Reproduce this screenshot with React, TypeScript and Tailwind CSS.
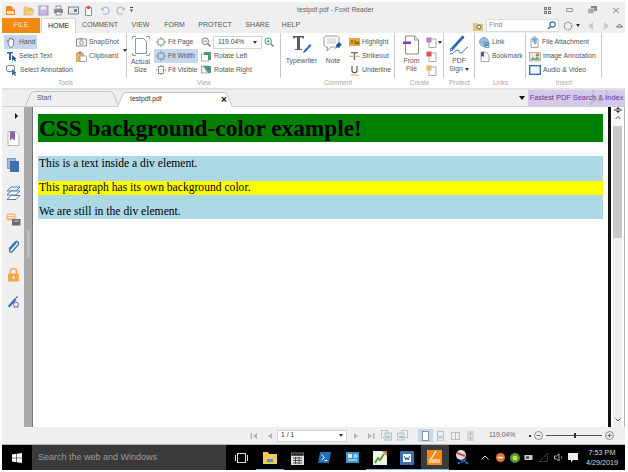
import React from 'react';

const Svg: React.FC<{ w: number; h: number; className?: string; children: React.ReactNode }> = ({ w, h, className, children }) => (
  <svg width={w} height={h} viewBox={`0 0 ${w} ${h}`} fill="none" className={`shrink-0 ${className ?? ''}`}>
    {children}
  </svg>
);

const Caret = () => <span className="w-0 h-0 border-x-[2px] border-x-transparent border-t-[3px] border-t-[#333]" />;

/* ---------- quick access ---------- */
const QuickIcons = () => (
  <div className="flex items-center gap-[4px] pl-[3px]">
    <Svg w={11} h={11}>
      <path d="M2 1h5l3 3v6H1V2z" fill="#ee8a1d" />
      <path d="M6 1h2v3h2" stroke="#fff" strokeWidth={0.8} />
      <rect x={2} y={6} width={7} height={3} fill="#fff" opacity={0.75} />
    </Svg>
    <Svg w={11} h={11} className="ml-[3px]">
      <path d="M1 2h3l1 1h4v2H4L1 10z" fill="#f3cf85" stroke="#d9a552" strokeWidth={0.6} />
      <path d="M3 5h8l-2 5H1z" fill="#f3cf85" stroke="#d9a552" strokeWidth={0.6} />
    </Svg>
    <Svg w={11} h={11}>
      <rect x={1} y={1} width={9} height={9} fill="#cbb8df" stroke="#a98fc6" />
      <rect x={3} y={1.5} width={5} height={3} fill="#f2edf7" />
    </Svg>
    <Svg w={11} h={11}>
      <rect x={3} y={1} width={5} height={3} fill="#fff" stroke="#666" strokeWidth={0.7} />
      <rect x={1} y={4} width={9} height={4} fill="#8a8f96" />
      <rect x={3} y={7} width={5} height={3} fill="#fff" stroke="#666" strokeWidth={0.7} />
    </Svg>
    <Svg w={11} h={11}>
      <rect x={0.5} y={2} width={10} height={7} fill="#e8e8e8" stroke="#666" strokeWidth={0.8} />
      <rect x={6} y={4} width={3} height={3} fill="#5d86b8" />
    </Svg>
    <Svg w={11} h={11}>
      <path d="M2.5 2.5h6v8h-6z" fill="#fff" stroke="#777" strokeWidth={0.8} />
      <circle cx={5.5} cy={2.5} r={1.8} fill="#d9553f" />
    </Svg>
    <Svg w={11} h={11} className="ml-[2px]">
      <path d="M2 5a3.6 3.6 0 1 1 1.2 3.4" stroke="#a9bdd9" strokeWidth={1.3} />
      <path d="M0.5 2.5 2.2 6 4.6 4z" fill="#a9bdd9" />
    </Svg>
    <Svg w={11} h={11}>
      <path d="M9 5a3.6 3.6 0 1 0-1.2 3.4" stroke="#a9bdd9" strokeWidth={1.3} />
      <path d="M10.5 2.5 8.8 6 6.4 4z" fill="#a9bdd9" />
    </Svg>
    <Svg w={4} h={6}>
      <rect width={3} height={1} fill="#444" />
      <path d="M0 2.5h3L1.5 5z" fill="#444" />
    </Svg>
  </div>
);

/* ---------- ribbon icons ---------- */
const HandIcon = () => (
  <Svg w={11} h={11}>
    <path d="M2 5 1 4.2c.5-.7 1-.5 2 .4V2.4c0-.9 1-.9 1 0V1.5c0-.9 1.2-.9 1.2 0v.5c0-.8 1.2-.8 1.2 0v1c0-.8 1.2-.8 1.2 0V7c0 2-1 3.3-3 3.3S3.2 8.500 2 5z" fill="#fff" stroke="#555" strokeWidth={0.7} />
  </Svg>
);
const SelectTextIcon = () => (
  <Svg w={11} h={11}>
    <path d="M1 1h6v1.500H5V9H3V2.500H1z" fill="#2c6cae" />
    <path d="M6 4v6l1.500-1.500L9 10.500l1-.5-1-2 1.500-.3z" fill="#24557f" />
  </Svg>
);
const SelectAnnotIcon = () => (
  <Svg w={12} h={11}>
    <rect x={0.5} y={0.5} width={8} height={6} rx={1.5} stroke="#6f7b85" strokeWidth={0.9} />
    <path d="M6 4v6.500l1.500-1.500L9 11l1-.6-1-2 1.500-.3z" fill="#2c6cae" />
  </Svg>
);
const CameraIcon = () => (
  <Svg w={11} h={10}>
    <rect x={0.5} y={2} width={10} height={7} fill="#f4f4f4" stroke="#777" strokeWidth={0.8} />
    <rect x={3.5} y={0.8} width={3} height={1.5} fill="#999" />
    <circle cx={5.5} cy={5.5} r={1.8} stroke="#777" strokeWidth={0.8} />
  </Svg>
);
const ClipboardIcon = () => (
  <Svg w={11} h={11}>
    <rect x={0.5} y={2} width={7} height={8.5} fill="#e7b768" stroke="#b98c3b" strokeWidth={0.6} />
    <rect x={2.5} y={0.5} width={3} height={2.5} fill="#888" />
    <rect x={4} y={5} width={6.5} height={5.5} fill="#fff" stroke="#888" strokeWidth={0.7} />
  </Svg>
);
const FitIcon: React.FC<{ kind: 'page' | 'width' | 'visible' }> = ({ kind }) => (
  <Svg w={10} h={10}>
    {kind === 'visible' ? (
      <rect x={2.5} y={1.5} width={5} height={7} stroke="#8a8a8a" strokeWidth={0.9} />
    ) : (
      <rect x={2} y={2} width={6} height={6} rx={1} stroke="#7d7d7d" strokeWidth={0.9} />
    )}
    <path d="M5 0v1.500M5 8.500V10M0 5h1.500M8.500 5H10" stroke="#45a68f" strokeWidth={1} />
  </Svg>
);
const MagIcon: React.FC<{ plus?: boolean }> = ({ plus }) => (
  <Svg w={10} h={10}>
    <circle cx={4.2} cy={4.2} r={3.3} fill="#fff" stroke={plus ? '#4a9a78' : '#777'} strokeWidth={1} />
    <path d="M6.800 6.800 9.500 9.500" stroke="#777" strokeWidth={1.3} />
    <path d="M2.500 4.200h3.400" stroke={plus ? '#4a9a78' : '#777'} strokeWidth={0.9} />
    {plus && <path d="M4.200 2.500v3.400" stroke="#4a9a78" strokeWidth={0.9} />}
  </Svg>
);
const RotateIcon: React.FC<{ right?: boolean }> = ({ right }) => (
  <Svg w={11} h={11}>
    <rect x={0.5} y={right ? 1 : 3} width={7} height={7} fill={right ? '#eef3ee' : '#fff'} stroke="#888" strokeWidth={0.7} />
    <path d={right ? 'M2 1h8v7H7z' : 'M3 1h7v8H7V4H3z'} fill="#3f8d6f" opacity={0.9} />
  </Svg>
);
const ActualSizeIcon = () => (
  <Svg w={18} h={20}>
    <path d="M3.500 2.500h8l3 3v12h-11z" fill="#fff" stroke="#8b8b8b" strokeWidth={0.9} />
    <path d="M.5 3V.5H4M14 .5h3.500V3M.5 17v2.500H4M14 19.500h3.500V17" stroke="#62b8a0" strokeWidth={1} />
  </Svg>
);
const TypewriterIcon = () => (
  <Svg w={20} h={20}>
    <path d="M1 1h11v2.500h-1.500L10 2.500H8V14h2v1H3v-1h2V2.500H3L2.500 3.500H1z" fill="#5b6066" />
    <path d="M11 18l1-2.500L18 9l1.500 1.500-6 6.500z" fill="#2c6cae" />
  </Svg>
);
const NoteIcon = () => (
  <Svg w={20} h={20}>
    <path d="M2.500 1h12l1.500 1.500v8L14.500 12H8l-4 4 .5-4h-2L1 10.500v-8z" fill="#fff" stroke="#9a9a9a" strokeWidth={1} />
    <path d="M4 4h9M4 6h9M4 8h9" stroke="#c3c3c3" />
    <path d="M13 10l3-3 3 3-1.500.8-1.500 2.500-1.500-1.300-2.500 2.500 1.500-3z" fill="#24588f" />
  </Svg>
);
const HighlightIcon = () => (
  <Svg w={11} h={8}>
    <rect width={11} height={8} fill="#eaa93b" />
    <path d="M1.500 6 3 2l1.500 4M6 2v4h1.500V4H6M8.500 4h1.500v2H8.500z" stroke="#5c3d08" strokeWidth={0.6} />
  </Svg>
);
const StrikeIcon = () => (
  <Svg w={11} h={10}>
    <path d="M2 1h7v1.200H6.200V9H4.800V2.200H2z" fill="#6d6d6d" />
    <rect y={4.8} width={11} height={1} fill="#d9a94a" />
  </Svg>
);
const UnderlineIcon = () => (
  <Svg w={11} h={11}>
    <path d="M3 1v4.500c0 3 5 3 5 0V1" stroke="#4a4a4a" strokeWidth={1.1} />
    <rect x={1.5} y={9.5} width={8} height={1} fill="#d9a94a" />
  </Svg>
);
const FromFileIcon = () => (
  <Svg w={18} h={20}>
    <path d="M2.500 1h9l4 4v14h-13z" fill="#fff" stroke="#7d7d7d" strokeWidth={0.9} />
    <path d="M11.500 1v4h4" stroke="#7d7d7d" strokeWidth={0.8} />
    <rect x={0} y={6.5} width={8} height={2.5} fill="#7f3fa0" />
  </Svg>
);
const CreateSmall: React.FC<{ color: string }> = ({ color }) => (
  <Svg w={11} h={11}>
    <rect x={3} y={2} width={7} height={8.5} fill="#fff" stroke="#8a8a8a" strokeWidth={0.7} />
    <rect x={0.5} y={0.5} width={5} height={5} fill={color} />
  </Svg>
);
const PdfSignIcon = () => (
  <Svg w={20} h={21}>
    <path d="M2 13 12 2l2 2L4 15z" fill="#2c6cae" />
    <path d="M12 2l1.500-1.500L15.500 2.500 14 4z" fill="#1d4d80" />
    <path d="M1 16l1-3 2 2zM1 19c4 0 5-4 8-4 2 0 0 4 3 3s3-4 7-6" stroke="#2c6cae" strokeWidth={0.9} />
  </Svg>
);
const LinkIcon = () => (
  <Svg w={11} h={11}>
    <circle cx={5} cy={5} r={4.5} fill="#a9c6e6" stroke="#5f8fc2" strokeWidth={0.7} />
    <path d="M1 5h8M5 .5v9" stroke="#5f8fc2" strokeWidth={0.6} />
    <path d="M6 6h4v2H6zM6 8.500h4v2H6z" stroke="#2c6cae" strokeWidth={0.7} />
  </Svg>
);
const BookmarkIcon = () => (
  <Svg w={11} h={11}>
    <path d="M2 1h5l3 3v6.500H2z" fill="#fff" stroke="#808080" strokeWidth={0.7} />
    <path d="M2 1h3v5L3.500 5 2 6z" fill="#7d3f9c" />
  </Svg>
);
const AttachIcon = () => (
  <Svg w={11} h={12}>
    <path d="M2 3h7v8.500H2z" fill="#fff" stroke="#808080" strokeWidth={0.7} />
    <path d="M4 6V2c0-1.500 3-1.500 3 0v5c0 1-1.500 1-1.500 0V3" stroke="#2c6cae" strokeWidth={0.8} />
  </Svg>
);
const ImageIcon = () => (
  <Svg w={12} h={11}>
    <rect x={0.5} y={1.5} width={11} height={8.5} fill="#e6e6e6" stroke="#9a9a9a" strokeWidth={0.7} />
    <path d="M1 9l3-3 2 2 2-3 3 4z" fill="#7da86b" />
    <rect x={7} y={2.5} width={3} height={2.5} fill="#c4852f" />
  </Svg>
);
const VideoIcon = () => (
  <Svg w={12} h={10}>
    <rect x={0.7} y={0.7} width={10.6} height={8.6} fill="#f4f8fc" stroke="#2c6cae" strokeWidth={1.3} />
  </Svg>
);

const Small: React.FC<{ icon: React.ReactNode; label: string; active?: boolean; caret?: boolean; className?: string }> = ({ icon, label, active, caret, className }) => (
  <div className={`flex items-center h-[14px] gap-[2px] px-[2px] whitespace-nowrap ${active ? 'bg-[#c5d7ee]' : ''} ${className ?? ''}`}>
    {icon}
    <span>{label}</span>
    {caret && <span className="ml-[3px]"><Caret /></span>}
  </div>
);

const Big: React.FC<{ icon: React.ReactNode; lines: string[]; caret?: boolean; className?: string }> = ({ icon, lines, caret, className }) => (
  <div className={`flex flex-col items-center ${className ?? ''}`}>
    <div className="h-[22px] flex items-start">{icon}</div>
    {lines.map((l, i) => (
      <div key={l} className="h-[8px] whitespace-nowrap flex items-center gap-[2px]">
        {l}
        {caret && i === lines.length - 1 && <Caret />}
      </div>
    ))}
  </div>
);

const Group: React.FC<{ label: string; w: string; children: React.ReactNode }> = ({ label, w, children }) => (
  <div className={`flex flex-col h-full shrink-0 pb-[1px] ${w}`}>
    <div className="flex-1 flex pt-[2px] border-r border-[#c9c9c9]">{children}</div>
    <div className="h-[9px] text-center text-[6.5px] leading-[9px] text-[#a9a9a9]">{label}</div>
  </div>
);

const Ribbon = () => (
  <div className="flex h-[57px] bg-white border-b-[2px] border-[#e2e2e2] pl-[2px] text-[6.8px] text-[#555] font-['Liberation_Sans',sans-serif]">
    <Group label="Tools" w="w-[123px]">
      <div className="flex flex-col w-[70px]">
        <Small icon={<HandIcon />} label="Hand" active className="w-[33px]" />
        <Small icon={<SelectTextIcon />} label="Select Text" />
        <Small icon={<SelectAnnotIcon />} label="Select Annotation" />
      </div>
      <div className="flex flex-col">
        <Small icon={<CameraIcon />} label="SnapShot" />
        <Small icon={<ClipboardIcon />} label="Clipboard" caret />
      </div>
    </Group>
    <Group label="View" w="w-[154px]">
      <Big icon={<ActualSizeIcon />} lines={['Actual', 'Size']} className="w-[27px] pt-[1px]" />
      <div className="flex flex-col w-[44px]">
        <Small icon={<FitIcon kind="page" />} label="Fit Page" />
        <Small icon={<FitIcon kind="width" />} label="Fit Width" active />
        <Small icon={<FitIcon kind="visible" />} label="Fit Visible" />
      </div>
      <div className="flex flex-col ml-[1px]">
        <div className="flex items-center h-[14px] gap-[2px] pl-[2px]">
          <MagIcon />
          <div className="flex items-center justify-between w-[49px] h-[13px] px-[4px] border border-[#d5d5d5] bg-white text-[#444]">
            <span>119.04%</span>
            <Caret />
          </div>
          <MagIcon plus />
        </div>
        <Small icon={<RotateIcon />} label="Rotate Left" />
        <Small icon={<RotateIcon right />} label="Rotate Right" />
      </div>
    </Group>
    <Group label="Comment" w="w-[114px]">
      <Big icon={<TypewriterIcon />} lines={['Typewriter']} className="w-[40px] pl-[1px]" />
      <Big icon={<NoteIcon />} lines={['Note']} className="w-[24px]" />
      <div className="flex flex-col ml-[2px]">
        <Small icon={<HighlightIcon />} label="Highlight" />
        <Small icon={<StrikeIcon />} label="Strikeout" />
        <Small icon={<UnderlineIcon />} label="Underline" />
      </div>
    </Group>
    <Group label="Create" w="w-[49px]">
      <Big icon={<FromFileIcon />} lines={['From', 'File']} className="w-[30px] pl-[3px]" />
      <div className="flex flex-col items-start pl-[1px]">
        <div className="h-[14px] flex items-center gap-[1px]"><CreateSmall color="#b284c9" /><Caret /></div>
        <div className="h-[14px] flex items-center"><CreateSmall color="#e3534a" /></div>
        <div className="h-[14px] flex items-center"><CreateSmall color="#e7b768" /></div>
      </div>
    </Group>
    <Group label="Protect" w="w-[31px]">
      <Big icon={<PdfSignIcon />} lines={['PDF', 'Sign']} caret className="w-full" />
    </Group>
    <Group label="Links" w="w-[51px]">
      <div className="flex flex-col pl-[2px]">
        <Small icon={<LinkIcon />} label="Link" />
        <Small icon={<BookmarkIcon />} label="Bookmark" />
      </div>
    </Group>
    <Group label="Insert" w="w-[76px]">
      <div className="flex flex-col pl-[1px]">
        <Small icon={<AttachIcon />} label="File Attachment" />
        <Small icon={<ImageIcon />} label="Image Annotation" />
        <Small icon={<VideoIcon />} label="Audio & Video" />
      </div>
    </Group>
  </div>
);

const MenuTabs = () => (
  <div className="flex items-end h-[15px] bg-[#efefef] text-[7px] font-['Liberation_Sans',sans-serif] text-[#555]">
    <div className="w-[38px] h-[15px] bg-[#f08a12] text-[#f7e6c8] flex items-center justify-center">FILE</div>
    <div className="w-[35px] h-[15px] ml-[1px] bg-white border-x border-t border-[#d5d5d5] text-[#222] flex items-center justify-center">HOME</div>
    <div className="h-[15px] w-[48px] flex items-center justify-center">COMMENT</div>
    <div className="h-[15px] w-[33px] flex items-center justify-center">VIEW</div>
    <div className="h-[15px] w-[35px] flex items-center justify-center">FORM</div>
    <div className="h-[15px] w-[46px] flex items-center justify-center">PROTECT</div>
    <div className="h-[15px] w-[39px] flex items-center justify-center">SHARE</div>
    <div className="h-[15px] w-[28px] flex items-center justify-center">HELP</div>
  </div>
);

const WindowBtns = () => (
  <div className="flex items-center gap-[15px] pr-[5px]">
    <div className="grid grid-cols-2 gap-[1px]">
      <span className="w-[3px] h-[3px] border border-[#777]" />
      <span className="w-[3px] h-[3px] border border-[#777]" />
      <span className="w-[3px] h-[3px] border border-[#777]" />
      <span className="w-[3px] h-[3px] border border-[#777]" />
    </div>
    <span className="w-[7px] h-[4px] border border-[#999] rounded-[1px]" />
    <Svg w={9} h={8}>
      <rect x={3} y={0} width={6} height={5} fill="#888" />
      <rect x={0} y={2.5} width={6} height={5} fill="#aaa" stroke="#eee" strokeWidth={0.5} />
    </Svg>
    <Svg w={8} h={7}>
      <path d="M1 1l6 5M7 1 1 6" stroke="#aaa" strokeWidth={1.3} />
    </Svg>
  </div>
);

const FindBar = () => (
  <div className="absolute right-0 top-0 h-[15px] flex items-center gap-[3px] pr-[2px] text-[6.8px] text-[#888] font-['Liberation_Sans',sans-serif]">
    <Svg w={10} h={10}>
      <path d="M0 2h4l1 1h5v7H0z" fill="#eec36a" />
      <circle cx={6} cy={6} r={2} fill="#fff" stroke="#2c6cae" />
    </Svg>
    <div className="w-[73px] h-[13px] bg-white border border-[#ddd] flex items-center justify-between px-[2px]">
      <span>Find</span>
      <Svg w={9} h={9}>
        <circle cx={5.5} cy={3.5} r={2.7} stroke="#2c6cae" strokeWidth={1.2} />
        <path d="M3.500 5.500 1 8" stroke="#2c6cae" strokeWidth={1.5} />
      </Svg>
    </div>
    <Svg w={10} h={10} className="ml-[1px]">
      <circle cx={5} cy={5} r={3.8} stroke="#888" strokeWidth={1.2} strokeDasharray="1.5 0.7" />
    </Svg>
    <Caret />
    <span className="w-[8px] flex justify-center ml-[3px]"><span className="w-0 h-0 border-y-[4px] border-y-transparent border-r-[5px] border-r-[#ccc]" /></span>
    <span className="w-[8px] flex justify-center ml-[5px]"><span className="w-0 h-0 border-y-[4px] border-y-transparent border-l-[5px] border-l-[#ccc]" /></span>
    <Svg w={7} h={5} className="ml-[3px]">
      <path d="M.5 4 3.500 1l3 3z" stroke="#666" />
    </Svg>
  </div>
);

/* tab outline: slanted left edge, rounded top */
const TabShape: React.FC<{ w: number; fill: string }> = ({ w, fill }) => (
  <svg width={w} height={15} viewBox={`0 0 ${w} 15`} className="absolute left-0 top-0">
    <path d={`M0.5 15 L6 2 Q7 .5 9 .5 H${w - 9} Q${w - 7} .5 ${w - 6} 2 L${w - 0.5} 15`} fill={fill} stroke="#c4c4c4" />
  </svg>
);

const DocTabs = () => (
  <div className="flex items-end h-[17px] bg-[#efefef] border-b border-[#cfcfcf] pl-[23px] text-[6.8px] text-[#555] font-['Liberation_Sans',sans-serif]">
    <div className="relative w-[94px] h-[15px] flex items-center pl-[12px]">
      <TabShape w={94} fill="#efefef" />
      <span className="relative">Start</span>
    </div>
    <div className="relative w-[116px] h-[15px] -ml-[2px] -mb-[1px] flex items-center pl-[13px] text-[#333]">
      <TabShape w={116} fill="#fff" />
      <span className="relative">testpdf.pdf</span>
      <span className="absolute left-[104px] text-[10px] font-bold text-[#111]">×</span>
    </div>
    <div className="ml-auto flex items-center h-full">
      <span className="w-0 h-0 mr-[3px] border-x-[3px] border-x-transparent border-t-[4px] border-t-[#111]" />
      <div className="relative w-[97px] h-full bg-[#d4c9ea] text-[#5b3a9b] text-[7.4px] flex items-center justify-center whitespace-nowrap overflow-hidden">
        <svg width={24} height={17} viewBox="0 0 24 17" className="absolute left-[60px] top-0">
          <circle cx={12} cy={4} r={7} stroke="#c2b4e0" strokeWidth={1.5} fill="none" />
          <path d="M7 9 2 15" stroke="#c2b4e0" strokeWidth={2} />
        </svg>
        <span className="relative">Fastest PDF Search &amp; Index</span>
      </div>
    </div>
  </div>
);

const DocPage = () => (
  <div className="flex-1 bg-white px-[5px] pt-[7px] font-['Liberation_Serif',serif] text-black">
    <h1 className="bg-[#008000] text-[23.3px] leading-[28px] font-bold h-[28px] pl-[1px] whitespace-nowrap">CSS background-color example!</h1>
    <div className="mt-[14px] bg-[#add8e6] text-[11.6px] leading-[14px] h-[63px] pt-[1px]">
      <p className="pl-[1px]">This is a text inside a div element.</p>
      <p className="mt-[10px] pl-[1px] bg-[#ffff00]">This paragraph has its own background color.</p>
      <p className="mt-[10px] pl-[1px]">We are still in the div element.</p>
    </div>
  </div>
);

const RailIcons = () => (
  <div className="w-[22px] shrink-0 bg-[#efefef] flex flex-col items-center pt-[6px]">
    <span className="w-0 h-0 border-y-[3px] border-y-transparent border-l-[3px] border-l-[#111] ml-[6px]" />
    <Svg w={13} h={15} className="mt-[12px]">
      <path d="M1 .5h8l3 3v11H1z" fill="#fff" stroke="#b4b4b4" />
      <path d="M3 .5h5v9l-2.500-2L3 9.500z" fill="#8d5fb0" />
    </Svg>
    <Svg w={13} h={15} className="mt-[12px]">
      <rect x={0.5} y={0.5} width={8} height={10} fill="#9fb9d6" stroke="#5f86b0" strokeWidth={0.7} />
      <rect x={3} y={3} width={9} height={11} fill="#3f72ad" />
    </Svg>
    <Svg w={15} h={15} className="mt-[13px]">
      <path d="M1 5 5 1h9l-4 4z" stroke="#3f72ad" strokeWidth={0.9} />
      <path d="M1 9l4-4h9l-4 4z" stroke="#3f72ad" fill="#fff" strokeWidth={0.9} />
      <path d="M1 13.500l4-4h9l-4 4z" stroke="#3f72ad" fill="#fff" strokeWidth={0.9} />
    </Svg>
    <Svg w={15} h={14} className="mt-[12px]">
      <rect x={0.5} y={0.5} width={9} height={7} fill="#efbd78" />
      <path d="M2 2.500h6M2 4.500h6" stroke="#fff" strokeWidth={0.8} />
      <rect x={6} y={6} width={8.5} height={6.5} fill="#6d6d6d" />
      <path d="M7.500 8h5.500" stroke="#ddd" strokeWidth={0.8} />
    </Svg>
    <Svg w={13} h={15} className="mt-[13px]">
      <path d="M9.500 2.500 3 9.500c-1.500 2 .8 3.500 2.300 2L11 5c2-2.500-1.300-5-3.300-2.500L2 9" stroke="#3f78b8" strokeWidth={1.3} />
    </Svg>
    <Svg w={13} h={15} className="mt-[12px]">
      <path d="M3.500 7V4.500c0-4 6-4 6 0V7" stroke="#f0a84e" strokeWidth={1.5} />
      <rect x={1} y={6.5} width={11} height={8} rx={1} fill="#f0a84e" />
      <rect x={5.8} y={9} width={1.5} height={3} fill="#fff" />
    </Svg>
    <Svg w={13} h={13} className="mt-[13px]">
      <path d="M1 11 8 3l1.500 1.500L2.500 12.500zM8.500 2.500 10 1l1 1-1.500 1.500z" fill="#2c6cae" />
      <circle cx={9} cy={9.5} r={2.5} fill="#f1ecf6" stroke="#8d5fb0" />
      <path d="M7.500 11.500 7 13M10.500 11.500l.5 1.500" stroke="#8d5fb0" />
    </Svg>
  </div>
);

const Scrollbar = () => (
  <div className="w-[17px] shrink-0 flex">
    <div className="w-[3px] bg-[#111]" />
    <div className="w-[2px] bg-white" />
    <div className="w-[9px] bg-[#efefef] flex flex-col items-center">
      <div className="w-full h-[19px] bg-[#f7f7f7] flex flex-col items-center">
        <Svg w={8} h={6}>
          <path d="M0 3h8" stroke="#333" />
          <path d="M4 0 2 2h4zM4 6 2 4h4z" fill="#333" />
        </Svg>
        <Svg w={8} h={10}>
          <path d="M1.500 6 4 3.500 6.500 6" stroke="#555" />
        </Svg>
      </div>
      <div className="w-full h-[112px] bg-[#c9c9c9]" />
      <div className="flex-1" />
      <div className="w-full h-[14px] flex items-center justify-center">
        <Svg w={8} h={6}>
          <path d="M1.500 1.500 4 4l2.500-2.500" stroke="#555" />
        </Svg>
      </div>
    </div>
    <div className="w-[2px] bg-white" />
    <div className="w-[1px] bg-[#b0b0b0]" />
  </div>
);

const NavBars: React.FC<{ flip?: boolean }> = ({ flip }) => (
  <Svg w={8} h={8} className={flip ? 'rotate-180' : ''}>
    <rect x={0.5} y={1} width={1.5} height={6} fill="#b5b5b5" />
    <path d="M7 1v6L3 4z" fill="#b5b5b5" />
  </Svg>
);
const NavArrow: React.FC<{ flip?: boolean }> = ({ flip }) => (
  <Svg w={6} h={8} className={flip ? 'rotate-180' : ''}>
    <path d="M5 1v6L1 4z" fill="#b5b5b5" />
  </Svg>
);
const PageStep: React.FC<{ flip?: boolean }> = ({ flip }) => (
  <Svg w={11} h={11} className={flip ? '-scale-x-100' : ''}>
    <rect x={0.5} y={0.5} width={6} height={7} fill="#eef1f4" stroke="#b9c3cc" />
    <rect x={4} y={3} width={6.5} height={7} fill="#dfe6ec" stroke="#b9c3cc" />
    <path d="M5 7h4" stroke="#6fb08a" />
  </Svg>
);
const ViewMode: React.FC<{ kind: number; active?: boolean }> = ({ kind, active }) => (
  <div className={`w-[15px] h-[13px] flex items-center justify-center ${active ? 'bg-[#c5d7ee]' : ''}`}>
    <Svg w={9} h={10}>
      {kind === 0 && <rect x={1.5} y={0.5} width={6} height={9} fill="#fff" stroke="#8f8f8f" />}
      {kind === 1 && <><rect x={1.5} y={0.5} width={6} height={5} stroke="#bdbdbd" /><rect x={1.5} y={7} width={6} height={3} stroke="#bdbdbd" /></>}
      {kind === 2 && <><rect x={0.5} y={1.5} width={4} height={7} stroke="#bdbdbd" /><rect x={4.5} y={1.5} width={4} height={7} stroke="#bdbdbd" /></>}
      {kind === 3 && <path d="M1 1h7M1 9h7M4.500 1v8M2 3h5v4H2z" stroke="#bdbdbd" />}
    </Svg>
  </div>
);

const StatusBar = () => (
  <div className="h-[18px] bg-[#efefef] border-b border-[#b8b8b8] flex items-center pl-[248px] text-[6.8px] text-[#666] font-['Liberation_Sans',sans-serif]">
    <NavBars />
    <span className="w-[9px]" />
    <NavArrow />
    <span className="w-[4px]" />
    <div className="w-[70px] h-[12px] bg-white border border-[#d2d2d2] flex items-center justify-between px-[3px] text-[#333]">
      <span>1 / 1</span>
      <Caret />
    </div>
    <span className="w-[6px]" />
    <NavArrow flip />
    <span className="w-[8px]" />
    <NavBars flip />
    <span className="w-[6px]" />
    <PageStep />
    <span className="w-[5px]" />
    <PageStep flip />
    <span className="w-[10px]" />
    <ViewMode kind={0} active />
    <ViewMode kind={1} />
    <ViewMode kind={2} />
    <ViewMode kind={3} />
    <span className="w-[11px]" />
    <span className="w-[40px]">119.04%</span>
    <span className="w-[2px] h-[2px] bg-[#333]" />
    <Svg w={9} h={9} className="ml-[3px]">
      <circle cx={4.5} cy={4.5} r={4} stroke="#777" strokeWidth={0.8} />
      <path d="M2.500 4.500h4" stroke="#666" />
    </Svg>
    <div className="relative w-[56px] h-[1px] bg-[#555] mx-[3px]">
      <span className="absolute left-[28px] -top-[2px] w-[2px] h-[5px] bg-[#333]" />
    </div>
    <Svg w={9} h={9}>
      <circle cx={4.5} cy={4.5} r={4} stroke="#777" strokeWidth={0.8} />
      <path d="M2.500 4.500h4M4.500 2.500v4" stroke="#666" />
    </Svg>
  </div>
);

const TaskSlot: React.FC<{ w?: string; active?: boolean; open?: boolean; children: React.ReactNode }> = ({ w = 'w-[27.5px]', active, open, children }) => (
  <div className={`relative h-full flex items-center justify-center shrink-0 ${w} ${active ? 'bg-[#3a3a3a]' : ''}`}>
    {children}
    {open && <span className="absolute bottom-0 left-0 right-0 h-[1px] bg-[#7fb8e6]" />}
  </div>
);

const TraySlot: React.FC<{ children: React.ReactNode }> = ({ children }) => (
  <div className="w-[14.7px] flex justify-center shrink-0">{children}</div>
);

const Taskbar = () => (
  <div className="h-[25px] bg-black flex items-center font-['Liberation_Sans',sans-serif]">
    <div className="w-[30px] flex justify-center shrink-0">
      <Svg w={10} h={10}>
        <path d="M0 1.500 4.500.8v3.900H0zM5 .7 10 0v4.700H5zM0 5.300h4.500v3.900L0 8.500zM5 5.300h5V10l-5-.7z" fill="#fff" />
      </Svg>
    </div>
    <div className="w-[194px] shrink-0 h-full bg-[#3a3a3a] flex items-center pl-[6px] text-[9px] text-[#9b9b9b] whitespace-nowrap">Search the web and Windows</div>
    <TaskSlot w="w-[30px]">
      <Svg w={13} h={10}>
        <rect x={2.5} y={0.5} width={8} height={9} stroke="#ddd" />
        <path d="M.5 2v6M12.500 2v6" stroke="#ddd" />
      </Svg>
    </TaskSlot>
    <TaskSlot open>
      <Svg w={14} h={13}>
        <path d="M0 1h5l1 2h8v10H0z" fill="#f4c95b" />
        <rect x={4} y={8} width={6} height={3} fill="#3a9bd8" />
      </Svg>
    </TaskSlot>
    <TaskSlot>
      <Svg w={13} h={14}>
        <rect y={2} width={13} height={12} fill="#ddd" />
        <rect y={2} width={13} height={3} fill="#222" stroke="#ddd" strokeWidth={0.5} />
        <path d="M3 0v3M10 0v3M2 7h9M2 9.500h9M2 12h9M4.500 6v7M8 6v7" stroke="#333" strokeWidth={0.8} />
      </Svg>
    </TaskSlot>
    <TaskSlot>
      <Svg w={13} h={11}>
        <path d="M2 0h11l-2 11H0z" fill="#1f6fb5" />
        <path d="M3.500 2.500 6.500 5.500 3.500 8M6.500 8.500h3" stroke="#fff" />
      </Svg>
    </TaskSlot>
    <TaskSlot>
      <Svg w={13} h={11}>
        <rect width={13} height={11} fill="#2f9ad6" />
        <rect x={2} y={2} width={4} height={4} fill="#f1e7a8" />
        <path d="M7.500 3h4M7.500 5h4M2 8h9" stroke="#fff" />
      </Svg>
    </TaskSlot>
    <TaskSlot open>
      <Svg w={14} h={14}>
        <rect width={14} height={14} fill="#eef2e6" />
        <path d="M2 12l3-5 2 2 4-6" stroke="#5d9a3c" strokeWidth={2} />
        <path d="M9 0h5v5z" fill="#d27d2d" />
      </Svg>
    </TaskSlot>
    <TaskSlot open>
      <Svg w={14} h={14}>
        <rect width={14} height={14} rx={1} fill="#3f6fae" />
        <rect x={3} y={3} width={8} height={8} fill="#fff" />
        <path d="M4.500 5l1.200 4L7 6.500 8.300 9l1.200-4" stroke="#2c5a96" />
      </Svg>
    </TaskSlot>
    <TaskSlot active open>
      <Svg w={15} h={15}>
        <rect width={15} height={15} fill="#ef8a16" />
        <path d="M4 9 9 1" stroke="#fff" strokeWidth={1.2} />
        <rect x={2} y={9} width={11} height={4} fill="#f6c88d" />
      </Svg>
    </TaskSlot>
    <TaskSlot>
      <Svg w={15} h={15}>
        <circle cx={6} cy={5} r={5} fill="#ddd" />
        <path d="M2 3 10 6" stroke="#d24b3d" strokeWidth={2} />
        <path d="M5 10l6 2M11 9l-5 4" stroke="#2c6cae" strokeWidth={1.3} />
        <circle cx={4} cy={13} r={1.3} fill="#2c6cae" />
        <circle cx={12} cy={13} r={1.3} fill="#2c6cae" />
      </Svg>
    </TaskSlot>
    <div className="flex items-center ml-[2px]">
      <TraySlot>
        <Svg w={8} h={5}>
          <path d="M.5 4.500 4 1l3.500 3.500" stroke="#ddd" />
        </Svg>
      </TraySlot>
      <TraySlot>
        <Svg w={9} h={9}>
          <circle cx={4.5} cy={4.5} r={4.5} fill="#e8743b" />
          <rect x={2} y={3.8} width={5} height={1.5} fill="#fff" />
        </Svg>
      </TraySlot>
      <TraySlot>
        <Svg w={10} h={10}>
          <circle cx={5} cy={5} r={5} fill="#3d9a3c" />
          <circle cx={5} cy={5} r={2.5} fill="#f2d13a" />
        </Svg>
      </TraySlot>
      <TraySlot>
        <Svg w={10} h={7}>
          <rect x={0.5} y={1} width={8} height={5} fill="#ccc" />
          <rect x={2} y={2.5} width={3} height={2} fill="#333" />
        </Svg>
      </TraySlot>
      <TraySlot>
        <Svg w={10} h={9}>
          <path d="M.5 8.500 8.500.5v8z" stroke="#888" strokeWidth={0.8} strokeDasharray="1 1" />
        </Svg>
      </TraySlot>
      <TraySlot>
        <Svg w={10} h={9}>
          <path d="M.5 3v3h2L5 8V1L2.500 3z" stroke="#ddd" strokeWidth={0.8} />
          <path d="M7 3c1 1 1 2 0 3" stroke="#999" />
        </Svg>
      </TraySlot>
      <TraySlot>
        <Svg w={10} h={10}>
          <path d="M0 0h10v7H5L3 9.500V7H0z" fill="#eee" />
        </Svg>
      </TraySlot>
    </div>
    <div className="ml-auto mr-[6px] w-[34px] text-[7.2px] leading-[10px] text-center text-[#ddd] whitespace-nowrap">
      <div>7:53 PM</div>
      <div>4/29/2019</div>
    </div>
  </div>
);

export default function App() {
  return (
    <div className="w-[628px] h-[472px] bg-white pt-[2px] pl-[2px] pr-[3px] overflow-hidden">
      <div className="relative flex items-center justify-between h-[16px] bg-[#efefef]">
        <QuickIcons />
        <span className="absolute left-[295px] text-[6.8px] text-[#666] font-['Liberation_Sans',sans-serif]">testpdf.pdf - Foxit Reader</span>
        <WindowBtns />
      </div>
      <div className="relative">
        <MenuTabs />
        <FindBar />
      </div>
      <Ribbon />
      <DocTabs />
      <div className="flex h-[320px]">
        <RailIcons />
        <div className="w-[9px] shrink-0 bg-[#a9a9a9] flex justify-center border-r border-[#777] pt-[123px]">
          <div className="w-[3px] h-[28px] bg-[#bfbfbf]" />
        </div>
        <DocPage />
        <Scrollbar />
      </div>
      <StatusBar />
      <Taskbar />
    </div>
  );
}
